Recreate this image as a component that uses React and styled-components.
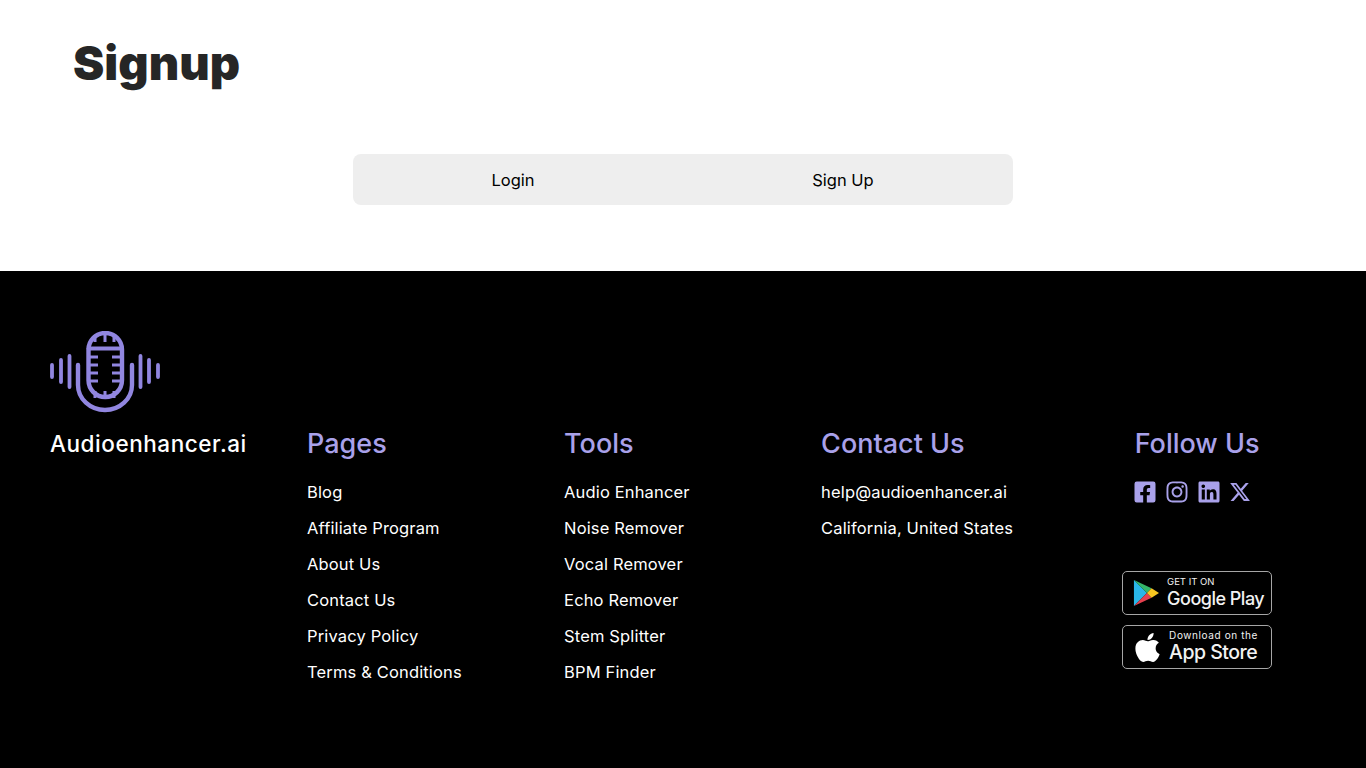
import React from "react";
import styled, { createGlobalStyle } from "styled-components";
import { FaFacebookSquare, FaInstagram, FaLinkedin } from "react-icons/fa";
import { FaXTwitter } from "react-icons/fa6";

const Global = createGlobalStyle`
  body {
    margin: 0;
    font-family: Inter, "Open Sans", sans-serif;
    background: #fff;
  }
`;

function Logo() {
  return (
    <svg width="110" height="82" viewBox="50 331 110 82" fill="none" stroke="#9186e0" strokeLinecap="round">
      <path d="M52 365v12M61 360v22M69.5 356v31M140.5 356v31M149 360v22M158 365v12" strokeWidth="3.8" />
      <rect x="88.5" y="333" width="33.5" height="64" rx="16.7" strokeWidth="4.4" />
      <path d="M88.5 348.5h33.5" strokeWidth="3.8" />
      <path d="M78 365v20a27 25 0 0 0 54 0v-20" strokeWidth="4.4" />
      <path
        d="M95 335v7M105 334v8M114 335v7M95 398v-7M105 398v-7M114 398v-7M89 357h9M89 365h9M89 373h9M89 381h9M112 357h9M112 365h9M112 373h9M112 381h9"
        strokeWidth="3"
        strokeLinecap="butt"
      />
    </svg>
  );
}

function PlayMark() {
  return (
    <svg width="26" height="28" viewBox="0 0 28 30">
      <path d="M1 1v28l14-14z" fill="#29b6e8" />
      <path d="M1 1l14 14 5-5z" fill="#34b56a" />
      <path d="M1 29l14-14 5 5z" fill="#e5404f" />
      <path d="M20 10l8 5-8 5-5-5z" fill="#f7c520" />
    </svg>
  );
}

function AppleMark() {
  return (
    <svg width="25" height="33" viewBox="0 0 384 512" fill="#fff">
      <path d="M318.7 268.7c-.2-36.7 16.4-64.4 50-84.8-18.8-26.9-47.2-41.7-84.7-44.6-35.5-2.8-74.3 20.7-88.5 20.7-15 0-49.4-19.7-76.4-19.7C63.3 141.2 4 184.8 4 273.5q0 39.3 14.4 81.2c12.8 36.7 59 126.7 107.2 125.2 25.2-.6 43-17.9 75.8-17.9 31.8 0 48.3 17.9 76.4 17.9 48.6-.7 90.4-82.5 102.6-119.3-65.2-30.7-61.7-90-61.7-91.9zm-56.6-164.2c27.3-32.4 24.8-61.9 24-72.5-24.1 1.4-52 16.4-67.9 34.9-17.5 19.8-27.8 44.3-25.6 71.9 26.1 2 49.9-11.4 69.5-34.3z" />
    </svg>
  );
}

const pages = ["Blog", "Affiliate Program", "About Us", "Contact Us", "Privacy Policy", "Terms & Conditions"];
const tools = ["Audio Enhancer", "Noise Remover", "Vocal Remover", "Echo Remover", "Stem Splitter", "BPM Finder"];
const contact = ["help@audioenhancer.ai", "California, United States"];

function App() {
  return (
    <>
      <Global />
      <Main>
        <Title>Signup</Title>
        <Tabs>
          <Tab>Login</Tab>
          <Tab>Sign Up</Tab>
        </Tabs>
      </Main>
      <Footer>
        <Brand>
          <Logo />
          <BrandName>Audioenhancer.ai</BrandName>
        </Brand>
        <Column>
          <Heading>Pages</Heading>
          {pages.map((p) => <Item key={p}>{p}</Item>)}
        </Column>
        <Column>
          <Heading>Tools</Heading>
          {tools.map((p) => <Item key={p}>{p}</Item>)}
        </Column>
        <Column>
          <Heading>Contact Us</Heading>
          {contact.map((p) => <Item key={p}>{p}</Item>)}
        </Column>
        <Follow>
          <Heading>Follow Us</Heading>
          <Socials>
            <FaFacebookSquare size={24} />
            <FaInstagram size={24} />
            <FaLinkedin size={24} />
            <FaXTwitter size={22} />
          </Socials>
          <Badges>
            <Badge $left={10} $gap={8}>
              <PlayMark />
              <BadgeText>
                <Small>GET IT ON</Small>
                <Big $size={18}>Google Play</Big>
              </BadgeText>
            </Badge>
            <Badge $left={12} $gap={9}>
              <AppleMark />
              <BadgeText>
                <Small $wide>Download on the</Small>
                <Big $size={19.5}>App Store</Big>
              </BadgeText>
            </Badge>
          </Badges>
        </Follow>
      </Footer>
    </>
  );
}

export default App;

const Main = styled.main`
  height: 271px;
  box-sizing: border-box;
  padding-top: 31px;
`;
const Title = styled.h1`
  margin: 0 0 59px 73px;
  font-size: 47px;
  line-height: 64px;
  font-weight: 900;
  color: #262626;
`;
const Tabs = styled.div`
  width: 660px;
  height: 51px;
  margin-left: 353px;
  display: flex;
  gap: 10px;
  background: #eeeeee;
  border-radius: 8px;
`;
const Tab = styled.div`
  width: 320px;
  display: flex;
  align-items: center;
  justify-content: center;
  font-size: 16.5px;
  color: #000;
`;
const Footer = styled.footer`
  height: 497px;
  box-sizing: border-box;
  background: #000;
  padding: 60px 50px 0;
  display: grid;
  grid-template-columns: repeat(5, 1fr);
  column-gap: 19.2px;
  align-items: start;
`;
const Brand = styled.div`
  display: flex;
  flex-direction: column;
`;
const BrandName = styled.div`
  margin-top: 15px;
  font-size: 22.5px;
  line-height: 32px;
  font-weight: 500;
  letter-spacing: 0.55px;
  color: #fff;
  white-space: nowrap;
`;
const Column = styled.div`
  padding-top: 94px;
  display: flex;
  flex-direction: column;
`;
const Heading = styled.h3`
  margin: 0 0 11px;
  font-size: 27px;
  line-height: 38px;
  font-weight: 500;
  color: #a9a1ea;
`;
const Item = styled.div`
  font-size: 16.5px;
  line-height: 36px;
  letter-spacing: 0.15px;
  color: #fff;
`;
const Follow = styled(Column)`
  align-items: center;
`;
const Socials = styled.div`
  height: 24px;
  margin-top: 6px;
  padding-right: 10px;
  display: flex;
  align-items: center;
  gap: 8px;
  color: #a9a1ea;
`;
const Badges = styled.div`
  margin-top: 67px;
  display: flex;
  flex-direction: column;
  gap: 10px;
`;
const Badge = styled.div`
  width: 150px;
  height: 44px;
  box-sizing: border-box;
  border: 1px solid #a6a6a6;
  border-radius: 5px;
  display: flex;
  align-items: center;
  gap: ${(p) => p.$gap}px;
  padding-left: ${(p) => p.$left}px;
  color: #f2f2f2;
`;
const BadgeText = styled.div`
  display: flex;
  flex-direction: column;
  white-space: nowrap;
`;
const Small = styled.span`
  font-size: ${(p) => (p.$wide ? "10px" : "9.5px")};
  line-height: 11px;
  letter-spacing: ${(p) => (p.$wide ? "0.6px" : "0")};
`;
const Big = styled.span`
  font-size: ${(p) => p.$size}px;
  line-height: 23px;
  font-weight: 500;
  letter-spacing: -0.5px;
`;
